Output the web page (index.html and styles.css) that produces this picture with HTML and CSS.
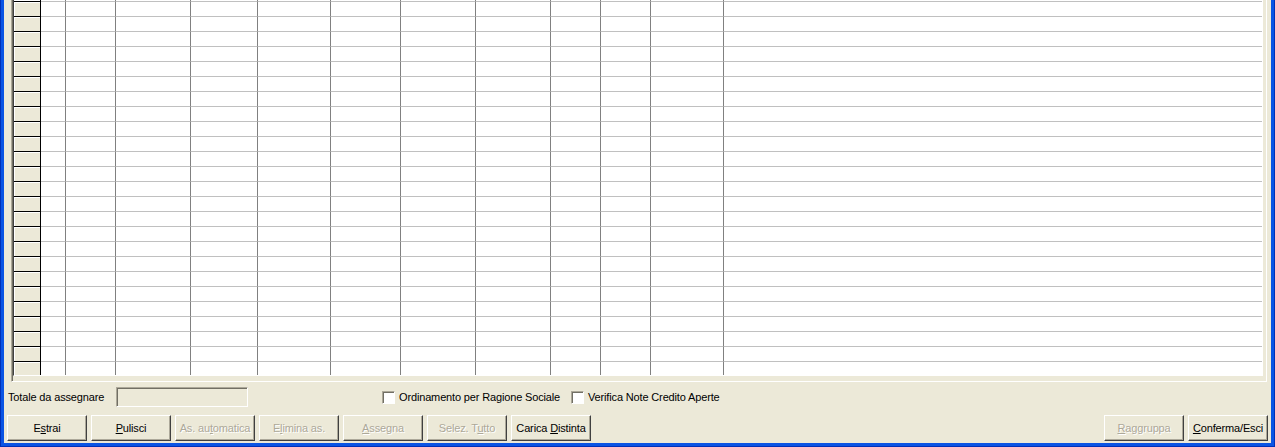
FILE: index.html
```html
<!DOCTYPE html>
<html lang="it">
<head>
<meta charset="utf-8">
<title>Assegnazione</title>
<link rel="stylesheet" href="styles.css">
</head>
<body>
<div class="window">
  <div class="gridframe">
    <div class="grid">
      <div class="row cut"><span class="rh"></span><span></span><span></span><span></span><span></span><span></span><span></span><span></span><span></span><span></span><span></span><span></span><span></span></div>
      <div class="row"><span class="rh"></span><span></span><span></span><span></span><span></span><span></span><span></span><span></span><span></span><span></span><span></span><span></span><span></span></div>
      <div class="row"><span class="rh"></span><span></span><span></span><span></span><span></span><span></span><span></span><span></span><span></span><span></span><span></span><span></span><span></span></div>
      <div class="row"><span class="rh"></span><span></span><span></span><span></span><span></span><span></span><span></span><span></span><span></span><span></span><span></span><span></span><span></span></div>
      <div class="row"><span class="rh"></span><span></span><span></span><span></span><span></span><span></span><span></span><span></span><span></span><span></span><span></span><span></span><span></span></div>
      <div class="row"><span class="rh"></span><span></span><span></span><span></span><span></span><span></span><span></span><span></span><span></span><span></span><span></span><span></span><span></span></div>
      <div class="row"><span class="rh"></span><span></span><span></span><span></span><span></span><span></span><span></span><span></span><span></span><span></span><span></span><span></span><span></span></div>
      <div class="row"><span class="rh"></span><span></span><span></span><span></span><span></span><span></span><span></span><span></span><span></span><span></span><span></span><span></span><span></span></div>
      <div class="row"><span class="rh"></span><span></span><span></span><span></span><span></span><span></span><span></span><span></span><span></span><span></span><span></span><span></span><span></span></div>
      <div class="row"><span class="rh"></span><span></span><span></span><span></span><span></span><span></span><span></span><span></span><span></span><span></span><span></span><span></span><span></span></div>
      <div class="row"><span class="rh"></span><span></span><span></span><span></span><span></span><span></span><span></span><span></span><span></span><span></span><span></span><span></span><span></span></div>
      <div class="row"><span class="rh"></span><span></span><span></span><span></span><span></span><span></span><span></span><span></span><span></span><span></span><span></span><span></span><span></span></div>
      <div class="row"><span class="rh"></span><span></span><span></span><span></span><span></span><span></span><span></span><span></span><span></span><span></span><span></span><span></span><span></span></div>
      <div class="row"><span class="rh"></span><span></span><span></span><span></span><span></span><span></span><span></span><span></span><span></span><span></span><span></span><span></span><span></span></div>
      <div class="row"><span class="rh"></span><span></span><span></span><span></span><span></span><span></span><span></span><span></span><span></span><span></span><span></span><span></span><span></span></div>
      <div class="row"><span class="rh"></span><span></span><span></span><span></span><span></span><span></span><span></span><span></span><span></span><span></span><span></span><span></span><span></span></div>
      <div class="row"><span class="rh"></span><span></span><span></span><span></span><span></span><span></span><span></span><span></span><span></span><span></span><span></span><span></span><span></span></div>
      <div class="row"><span class="rh"></span><span></span><span></span><span></span><span></span><span></span><span></span><span></span><span></span><span></span><span></span><span></span><span></span></div>
      <div class="row"><span class="rh"></span><span></span><span></span><span></span><span></span><span></span><span></span><span></span><span></span><span></span><span></span><span></span><span></span></div>
      <div class="row"><span class="rh"></span><span></span><span></span><span></span><span></span><span></span><span></span><span></span><span></span><span></span><span></span><span></span><span></span></div>
      <div class="row"><span class="rh"></span><span></span><span></span><span></span><span></span><span></span><span></span><span></span><span></span><span></span><span></span><span></span><span></span></div>
      <div class="row"><span class="rh"></span><span></span><span></span><span></span><span></span><span></span><span></span><span></span><span></span><span></span><span></span><span></span><span></span></div>
      <div class="row"><span class="rh"></span><span></span><span></span><span></span><span></span><span></span><span></span><span></span><span></span><span></span><span></span><span></span><span></span></div>
      <div class="row"><span class="rh"></span><span></span><span></span><span></span><span></span><span></span><span></span><span></span><span></span><span></span><span></span><span></span><span></span></div>
      <div class="row"><span class="rh"></span><span></span><span></span><span></span><span></span><span></span><span></span><span></span><span></span><span></span><span></span><span></span><span></span></div>
      <div class="row"><span class="rh"></span><span></span><span></span><span></span><span></span><span></span><span></span><span></span><span></span><span></span><span></span><span></span><span></span></div>
    </div>
  </div>

  <div class="options">
    <span class="lbl">Totale da assegnare</span>
    <span class="textbox"></span>
    <label class="check first"><span class="box"></span>Ordinamento per Ragione Sociale</label>
    <label class="check"><span class="box"></span>Verifica Note Credito Aperte</label>
  </div>

  <div class="buttons">
    <button class="btn">E<u>s</u>trai</button>
    <button class="btn"><u>P</u>ulisci</button>
    <button class="btn off">As. au<u>t</u>omatica</button>
    <button class="btn off">E<u>l</u>imina as.</button>
    <button class="btn off"><u>A</u>ssegna</button>
    <button class="btn off">Selez. T<u>u</u>tto</button>
    <button class="btn">Carica <u>D</u>istinta</button>
    <div class="right">
      <button class="btn off"><u>R</u>aggruppa</button>
      <button class="btn"><u>C</u>onferma/Esci</button>
    </div>
  </div>
</div>
</body>
</html>
```
FILE: styles.css
```css
html, body {
  margin: 0;
  padding: 0;
}
html {
  background: #0030b8;
}
body {
  width: 1275px;
  height: 447px;
  overflow: hidden;
  font-family: "Liberation Sans", Arial, sans-serif;
  font-size: 11px;
  letter-spacing: -0.15px;
  color: #000;
}
.window {
  margin: 0 1px 1px 1px;
  height: 446px;
  box-sizing: border-box;
  border-style: solid;
  border-color: #0a54e4;
  border-width: 0 3px 3px 3px;
  background: #ece9d8;
  display: flex;
  flex-direction: column;
}

/* grid */
.gridframe {
  margin: 0 4px 0 7px;
  border-left: 1px solid #aca899;
  border-right: 1px solid #fff;
  border-bottom: 1px solid #fff;
  padding: 0 3px 5px 1px;
  box-shadow: inset 1px 0 0 #716f64;
}
.grid {
  height: 375px;
  overflow: hidden;
  background: #fff;
  border-left: 1px solid #404040;
  border-right: 1px solid #fff;
  border-bottom: 1px solid #fff;
}
.row {
  display: grid;
  grid-template-columns: 27px 25px 50px 75px 67px 73px 70px 75px 75px 50px 50px 73px 538px;
  height: 15px;
}
.row.cut {
  height: 2px;
}
.row > span {
  box-sizing: border-box;
  border-right: 1px solid #808080;
  border-bottom: 1px solid #c0c0c0;
}
.row > span:last-child {
  border-right: 0;
}
.row > .rh {
  background: #ece9d8;
  border-right-color: #000;
  border-bottom-color: #000;
  box-shadow: inset 1px 1px 0 #fff;
}

/* options row */
.options {
  display: flex;
  align-items: center;
  height: 20px;
  margin-top: 5px;
  padding-left: 4px;
}
.lbl {
  width: 108px;
}
.textbox {
  width: 132px;
  height: 20px;
  box-sizing: border-box;
  border: 1px solid;
  border-color: #aca899 #fff #fff #aca899;
  box-shadow: inset 1px 1px 0 #716f64;
  background: #ece9d8;
}
.check {
  display: flex;
  align-items: center;
  gap: 4px;
  width: 189px;
}
.check.first {
  margin-left: 134px;
}
.box {
  width: 13px;
  height: 13px;
  box-sizing: border-box;
  border: 1px solid;
  border-color: #aca899 #fff #fff #aca899;
  box-shadow: inset 1px 1px 0 #716f64;
  background: #fff;
}

/* buttons */
.buttons {
  display: flex;
  gap: 4px;
  height: 26px;
  margin-top: 8px;
  padding: 0 3px;
}
.right {
  display: flex;
  gap: 4px;
  margin-left: auto;
}
.btn {
  width: 80px;
  height: 26px;
  box-sizing: border-box;
  padding: 0;
  margin: 0;
  font-family: "Liberation Sans", Arial, sans-serif;
  font-size: 11px;
  letter-spacing: -0.15px;
  color: #000;
  background: #ece9d8;
  border: 1px solid;
  border-color: #fff #404040 #404040 #fff;
  box-shadow: inset -1px -1px 0 #aca899;
  border-radius: 0;
  white-space: nowrap;
}
.btn.off {
  color: #aca899;
  text-shadow: 1px 1px 0 #fff;
}
```
